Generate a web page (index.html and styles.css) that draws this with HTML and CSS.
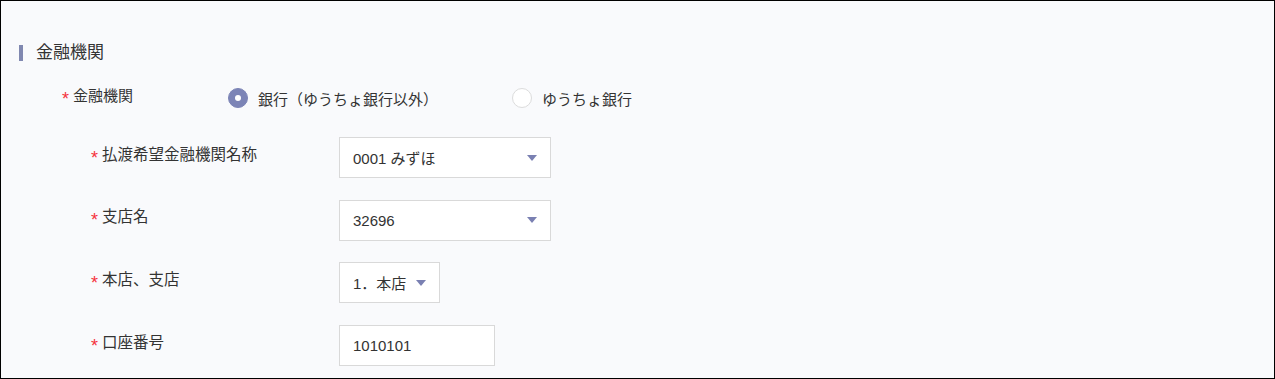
FILE: index.html
```html
<!DOCTYPE html>
<html>
<head>
  <meta charset="UTF-8">
  <title>金融機関</title>
  <link rel="stylesheet" href="styles.css">
</head>
<body>
  <div class="frame">
    <h3 class="section-title">金融機関</h3>

    <!-- 金融機関の種類 -->
    <div class="row row-top">
      <div class="label label-top"><span class="req">*</span>金融機関</div>
      <div class="radios">
        <label class="radio radio-first">
          <span class="radio-dot checked"></span>
          <span>銀行（ゆうちょ銀行以外）</span>
        </label>
        <label class="radio">
          <span class="radio-dot"></span>
          <span>ゆうちょ銀行</span>
        </label>
      </div>
    </div>

    <div class="fields">
      <div class="row">
        <div class="label"><span class="req">*</span>払渡希望金融機関名称</div>
        <div class="select w-wide">
          <span>0001 みずほ</span>
          <span class="caret"></span>
        </div>
      </div>
      <div class="row">
        <div class="label"><span class="req">*</span>支店名</div>
        <div class="select w-wide">
          <span>32696</span>
          <span class="caret"></span>
        </div>
      </div>
      <div class="row">
        <div class="label"><span class="req">*</span>本店、支店</div>
        <div class="select w-small">
          <span>1．本店</span>
          <span class="caret"></span>
        </div>
      </div>
      <div class="row">
        <div class="label"><span class="req">*</span>口座番号</div>
        <div class="input w-mid">1010101</div>
      </div>
    </div>
  </div>
</body>
</html>
```

FILE: styles.css
```css
html, body {
  margin: 0;
  padding: 0;
}
body {
  font-family: "Liberation Sans", "Noto Sans CJK JP", sans-serif;
  color: #333;
  font-size: 15px;
}
.frame {
  box-sizing: border-box;
  width: 1275px;
  height: 379px;
  border: 1px solid #000;
  background: #f9fafc;
  padding: 40px 0 0 18px;
  overflow: hidden;
}
.section-title {
  margin: 0;
  font-size: 17px;
  font-weight: normal;
  line-height: 24px;
  height: 24px;
  display: flex;
  align-items: center;
}
.section-title::before {
  content: "";
  display: inline-block;
  width: 4px;
  height: 16px;
  background: #8088b0;
  margin-right: 13px;
}

.row {
  display: flex;
  align-items: center;
}
.row-top {
  margin-top: 23px;
  height: 20px;
}
.label {
  box-sizing: border-box;
  width: 320px;
  padding-left: 72px;
  padding-bottom: 3px;
  line-height: 20px;
  font-size: 15.5px;
}
.label-top {
  width: 209px;
  padding-left: 43px;
  padding-bottom: 2px;
  font-size: 15px;
}
.req {
  color: #f5323c;
  font-size: 18px;
  margin-right: 4px;
  vertical-align: -4px;
}

.radios {
  display: flex;
  align-items: center;
}
.radio {
  display: flex;
  align-items: center;
  gap: 10px;
}
.radio-first {
  width: 284px;
}
.radio-dot {
  box-sizing: border-box;
  width: 20px;
  height: 20px;
  border-radius: 50%;
  border: 1px solid #dcdcdc;
  background: #fff;
}
.radio-dot.checked {
  border-color: #7c84b6;
  background: #7c84b6;
  position: relative;
}
.radio-dot.checked::after {
  content: "";
  position: absolute;
  left: 6px;
  top: 6px;
  width: 6px;
  height: 6px;
  border-radius: 50%;
  background: #fff;
}

.fields {
  margin-top: 29px;
  display: flex;
  flex-direction: column;
  gap: 21.7px;
}
.select, .input {
  box-sizing: border-box;
  height: 41px;
  border: 1px solid #d9d9d9;
  background: #fff;
  padding: 0 13px;
  display: flex;
  align-items: center;
  justify-content: space-between;
}
.caret {
  width: 0;
  height: 0;
  border-left: 5px solid transparent;
  border-right: 5px solid transparent;
  border-top: 6px solid #7a80b2;
}
.w-wide { width: 212px; }
.w-small { width: 101px; }
.w-mid { width: 156px; }
```
